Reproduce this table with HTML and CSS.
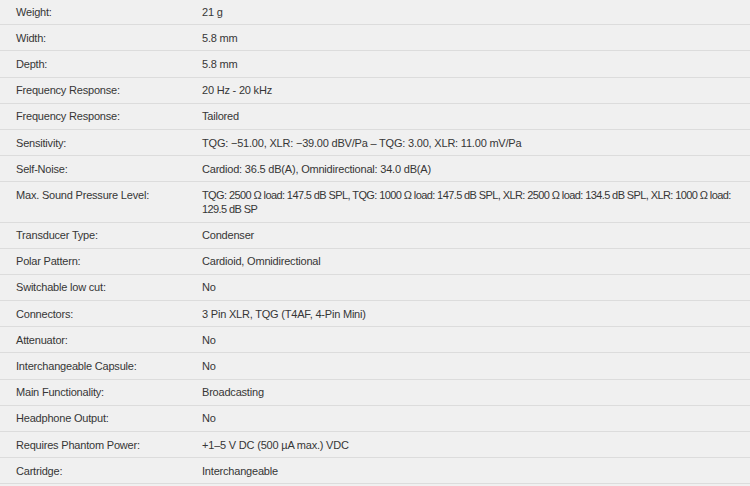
FILE: index.html
```html
<!DOCTYPE html>
<html lang="en">
<head>
  <meta charset="UTF-8" />
  <meta name="viewport" content="width=device-width, initial-scale=1.0"/>
  <title>Technical Data</title>
  <link rel="stylesheet" href="styles.css">
</head>
<body>

  <table class="specs">
    <tr><td class="label">Weight:</td><td class="value">21 g</td></tr>
    <tr><td class="label">Width:</td><td class="value">5.8 mm</td></tr>
    <tr><td class="label">Depth:</td><td class="value">5.8 mm</td></tr>
    <tr><td class="label">Frequency Response:</td><td class="value">20 Hz - 20 kHz</td></tr>
    <tr><td class="label">Frequency Response:</td><td class="value">Tailored</td></tr>
    <tr><td class="label">Sensitivity:</td><td class="value">TQG: &minus;51.00, XLR: &minus;39.00 dBV/Pa &ndash; TQG: 3.00, XLR: 11.00 mV/Pa</td></tr>
    <tr><td class="label">Self-Noise:</td><td class="value">Cardiod: 36.5 dB(A), Omnidirectional: 34.0 dB(A)</td></tr>
    <tr><td class="label">Max. Sound Pressure Level:</td><td class="value long">TQG: 2500 &Omega; load: 147.5 dB SPL, TQG: 1000 &Omega; load: 147.5 dB SPL, XLR: 2500 &Omega; load: 134.5 dB SPL, XLR: 1000 &Omega; load: 129.5 dB SP</td></tr>
    <tr><td class="label">Transducer Type:</td><td class="value">Condenser</td></tr>
    <tr><td class="label">Polar Pattern:</td><td class="value">Cardioid, Omnidirectional</td></tr>
    <tr><td class="label">Switchable low cut:</td><td class="value">No</td></tr>
    <tr><td class="label">Connectors:</td><td class="value">3 Pin XLR, TQG (T4AF, 4-Pin Mini)</td></tr>
    <tr><td class="label">Attenuator:</td><td class="value">No</td></tr>
    <tr><td class="label">Interchangeable Capsule:</td><td class="value">No</td></tr>
    <tr><td class="label">Main Functionality:</td><td class="value">Broadcasting</td></tr>
    <tr><td class="label">Headphone Output:</td><td class="value">No</td></tr>
    <tr><td class="label">Requires Phantom Power:</td><td class="value">+1&ndash;5 V DC (500 &micro;A max.) VDC</td></tr>
    <tr><td class="label">Cartridge:</td><td class="value">Interchangeable</td></tr>
  </table>

</body>
</html>
```

FILE: styles.css
```css
* {
  box-sizing: border-box;
  margin: 0;
  padding: 0;
}

body {
  font-family: 'Liberation Sans', Arial, sans-serif;
  background-color: #f0f0f0;
  color: #363636;
  font-size: 11px;
  letter-spacing: -0.2px;
}

.specs {
  width: 100%;
  border-collapse: collapse;
  margin-top: -1px;
}

.specs td {
  vertical-align: top;
  line-height: 14px;
  padding: 5.6px 0;
  border-bottom: 1px solid #dcdcdc;
}

.label {
  width: 202px;
  padding-left: 16px !important;
}

.value {
  padding-right: 12px !important;
}

.long {
  letter-spacing: -0.6px;
}
```
